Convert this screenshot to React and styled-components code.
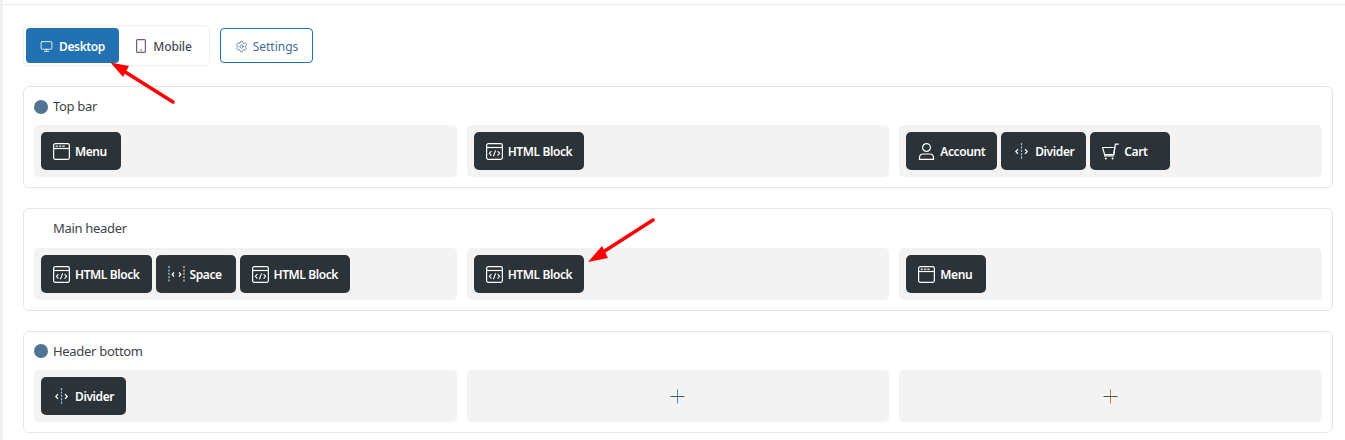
import React from 'react'
import styled, { createGlobalStyle } from 'styled-components'
import { Monitor, Settings } from 'lucide-react'

const Global = createGlobalStyle`
  html, body {
    margin: 0;
    background: #fff;
  }
  * { box-sizing: border-box; }
`

const Page = styled.div`
  position: relative;
  height: 440px;
  overflow: hidden;
  border-left: 3px solid #f1f1f1;
  padding-top: 4px;
  font-family: "Noto Sans", "Open Sans", sans-serif;
`

const Content = styled.div`
  border-top: 1px solid #ececec;
  padding: 20px 12px 0 20px;
  display: flex;
  flex-direction: column;
  gap: 20px;
`

const Toolbar = styled.div`
  display: flex;
  align-items: center;
  gap: 10px;
`

const Tabs = styled.div`
  display: flex;
  padding: 2px;
  width: 187px;
  height: 41px;
  border: 1px solid #eeeeee;
  border-radius: 5px;
`

const Tab = styled.div`
  display: flex;
  align-items: center;
  justify-content: center;
  gap: ${p => (p.$active ? '6px' : '7px')};
  width: ${p => (p.$active ? '93px' : '88px')};
  height: 35px;
  padding: ${p => (p.$active ? '1px 0 0 0' : '1px 0 0 2px')};
  border-radius: 4px;
  font-size: 12px;
  font-weight: ${p => (p.$active ? 600 : 500)};
  letter-spacing: ${p => (p.$active ? '-0.4px' : '-0.15px')};
  color: ${p => (p.$active ? '#fff' : '#444a55')};
  background: ${p => (p.$active ? '#2271b1' : 'transparent')};

  svg {
    color: ${p => (p.$active ? '#fff' : '#7a5a78')};
  }
`

const SettingsButton = styled.div`
  display: flex;
  align-items: center;
  justify-content: center;
  gap: 5px;
  width: 93px;
  height: 35px;
  padding-top: 1px;
  border: 1px solid #2271b1;
  border-radius: 4px;
  font-size: 12px;
  color: #3f6d94;
`

const Card = styled.section`
  height: 102.4px;
  border: 1px solid #e6e6e6;
  border-radius: 6px;
  padding: 10px;
`

const CardTitle = styled.div`
  display: flex;
  align-items: center;
  gap: 5px;
  height: 19.4px;
  margin-bottom: 9px;
  padding-bottom: 1.4px;
  font-size: 13px;
  letter-spacing: -0.3px;
  color: #3c434a;
`

const Dot = styled.span`
  width: 14px;
  height: 14px;
  margin-top: 1.4px;
  border-radius: 50%;
  background: ${p => (p.$hidden ? 'transparent' : '#527493')};
`

const Slots = styled.div`
  display: grid;
  grid-template-columns: repeat(3, 1fr);
  gap: 10px;
`

const Slot = styled.div`
  display: flex;
  align-items: center;
  justify-content: ${p => (p.$empty ? 'center' : 'flex-start')};
  gap: 4px;
  height: 52px;
  padding: 0 7px;
  border-radius: 5px;
  background: #f3f3f3;
`

const Block = styled.div`
  display: flex;
  align-items: center;
  gap: 5px;
  min-width: 80px;
  height: 38px;
  padding: 0.8px 12px 0;
  border-radius: 5px;
  background: #2c3338;
  color: #fff;
  font-size: 12px;
  font-weight: 600;
  letter-spacing: -0.4px;
  white-space: nowrap;
`

const Glyph = styled.svg`
  flex: none;
  fill: none;
  stroke: currentColor;
  stroke-width: 1.2;
`

const Annotations = styled.svg`
  position: absolute;
  left: -3px;
  top: 0;
  pointer-events: none;
`

const PhoneIcon = () => (
  <Glyph width="10" height="14" viewBox="0 0 10 14">
    <rect x="0.6" y="0.6" width="8.8" height="12.8" rx="1" />
    <path d="M4.2 11.2h1.6" />
  </Glyph>
)

const WindowIcon = () => (
  <Glyph width="17" height="17" viewBox="0 0 17 17">
    <rect x="0.6" y="0.6" width="15.8" height="15.8" rx="1.8" />
    <path d="M1 5.5h15" />
    <path d="M2.6 3.2h2.4M6 3.2h2.4M9.4 3.2h2.4" strokeWidth="1.5" stroke="#c9ccce" />
  </Glyph>
)

const CodeIcon = () => (
  <Glyph width="17" height="17" viewBox="0 0 17 17">
    <rect x="0.6" y="0.6" width="15.8" height="15.8" rx="1.8" />
    <path d="M1 4.5h15" />
    <path d="M5.4 8 3.4 10.3l2 2.3M11.6 8l2 2.3-2 2.3M9.6 7.4l-2.2 5.8" strokeWidth="1.1" />
  </Glyph>
)

const UserIcon = () => (
  <Glyph width="17" height="17" viewBox="0 0 17 17">
    <circle cx="8.5" cy="4.5" r="3.9" />
    <path d="M1.5 16.4v-1.6c0-2.4 1.8-3.8 3.8-3.8h6.4c2 0 3.8 1.4 3.8 3.8v1.6z" />
  </Glyph>
)

const DividerIcon = () => (
  <Glyph width="17" height="17" viewBox="0 0 17 17">
    <path d="M8.5 0v17" strokeDasharray="2.2 1.2" stroke="#8fc3e8" />
    <path d="M5 6.2 2.8 8.5 5 10.8M12 6.2l2.2 2.3-2.2 2.3" />
  </Glyph>
)

const SpaceIcon = () => (
  <Glyph width="17" height="17" viewBox="0 0 17 17">
    <path d="M1 0v17" strokeDasharray="2 1.4" stroke="#a9d0ea" />
    <path d="M16 0v17" strokeDasharray="2 1.4" stroke="#f0d6a0" />
    <path d="M6 6.5 4.2 8.5l1.8 2M11 6.5l1.8 2-1.8 2" />
  </Glyph>
)

const CartIcon = () => (
  <Glyph width="17" height="17" viewBox="0 0 17 17">
    <path d="M0.5 4.5h12.2l-1 7H2.6z" />
    <path d="M2.6 11.5v1.4h9.2" />
    <path d="M11.7 12.5 13.4 1.2h3.4" />
    <circle cx="3.8" cy="15.6" r="1" fill="#fff" stroke="none" />
    <circle cx="10.6" cy="15.6" r="1" fill="#fff" stroke="none" />
  </Glyph>
)

const PlusLines = styled.svg`
  flex: none;
  stroke-width: 1;
  fill: none;
`

const PlusIcon = ({ color }) => (
  <PlusLines width="15" height="15" viewBox="0 0 15 15">
    <path d="M7.5 0.5v14" stroke={color} />
    <path d="M0.5 7.5h14" stroke="#555" />
  </PlusLines>
)

const plusColors = [null, '#3f86c4', '#c07a3c']

const rows = [
  {
    title: 'Top bar',
    slots: [
      [{ icon: WindowIcon, label: 'Menu' }],
      [{ icon: CodeIcon, label: 'HTML Block' }],
      [
        { icon: UserIcon, label: 'Account' },
        { icon: DividerIcon, label: 'Divider' },
        { icon: CartIcon, label: 'Cart' },
      ],
    ],
  },
  {
    title: 'Main header',
    noDot: true,
    slots: [
      [
        { icon: CodeIcon, label: 'HTML Block' },
        { icon: SpaceIcon, label: 'Space' },
        { icon: CodeIcon, label: 'HTML Block' },
      ],
      [{ icon: CodeIcon, label: 'HTML Block' }],
      [{ icon: WindowIcon, label: 'Menu' }],
    ],
  },
  {
    title: 'Header bottom',
    slots: [[{ icon: DividerIcon, label: 'Divider' }], [], []],
  },
]

const App = () => (
  <Page>
    <Global />
    <Content>
      <Toolbar>
        <Tabs>
          <Tab $active>
            <Monitor size={13} strokeWidth={1.6} />
            Desktop
          </Tab>
          <Tab>
            <PhoneIcon />
            Mobile
          </Tab>
        </Tabs>
        <SettingsButton>
          <Settings size={13} strokeWidth={1.4} />
          Settings
        </SettingsButton>
      </Toolbar>
      {rows.map(row => (
        <Card key={row.title}>
          <CardTitle>
            <Dot $hidden={row.noDot} />
            {row.title}
          </CardTitle>
          <Slots>
            {row.slots.map((blocks, i) => (
              <Slot key={i} $empty={blocks.length === 0}>
                {blocks.length === 0 && <PlusIcon color={plusColors[i]} />}
                {blocks.map((block, j) => (
                  <Block key={j}>
                    <block.icon />
                    {block.label}
                  </Block>
                ))}
              </Slot>
            ))}
          </Slots>
        </Card>
      ))}
    </Content>
    <Annotations width="1345" height="440" viewBox="0 0 1345 440">
      <path d="M173 102 122 70" stroke="#f00" strokeWidth="3.5" strokeLinecap="round" />
      <path d="M110.5 62.5 129 66 123 77z" fill="#f00" />
      <path d="M653 220 600 254" stroke="#f00" strokeWidth="3.5" strokeLinecap="round" />
      <path d="M588 262 602 246 608 258z" fill="#f00" />
    </Annotations>
  </Page>
)

export default App
